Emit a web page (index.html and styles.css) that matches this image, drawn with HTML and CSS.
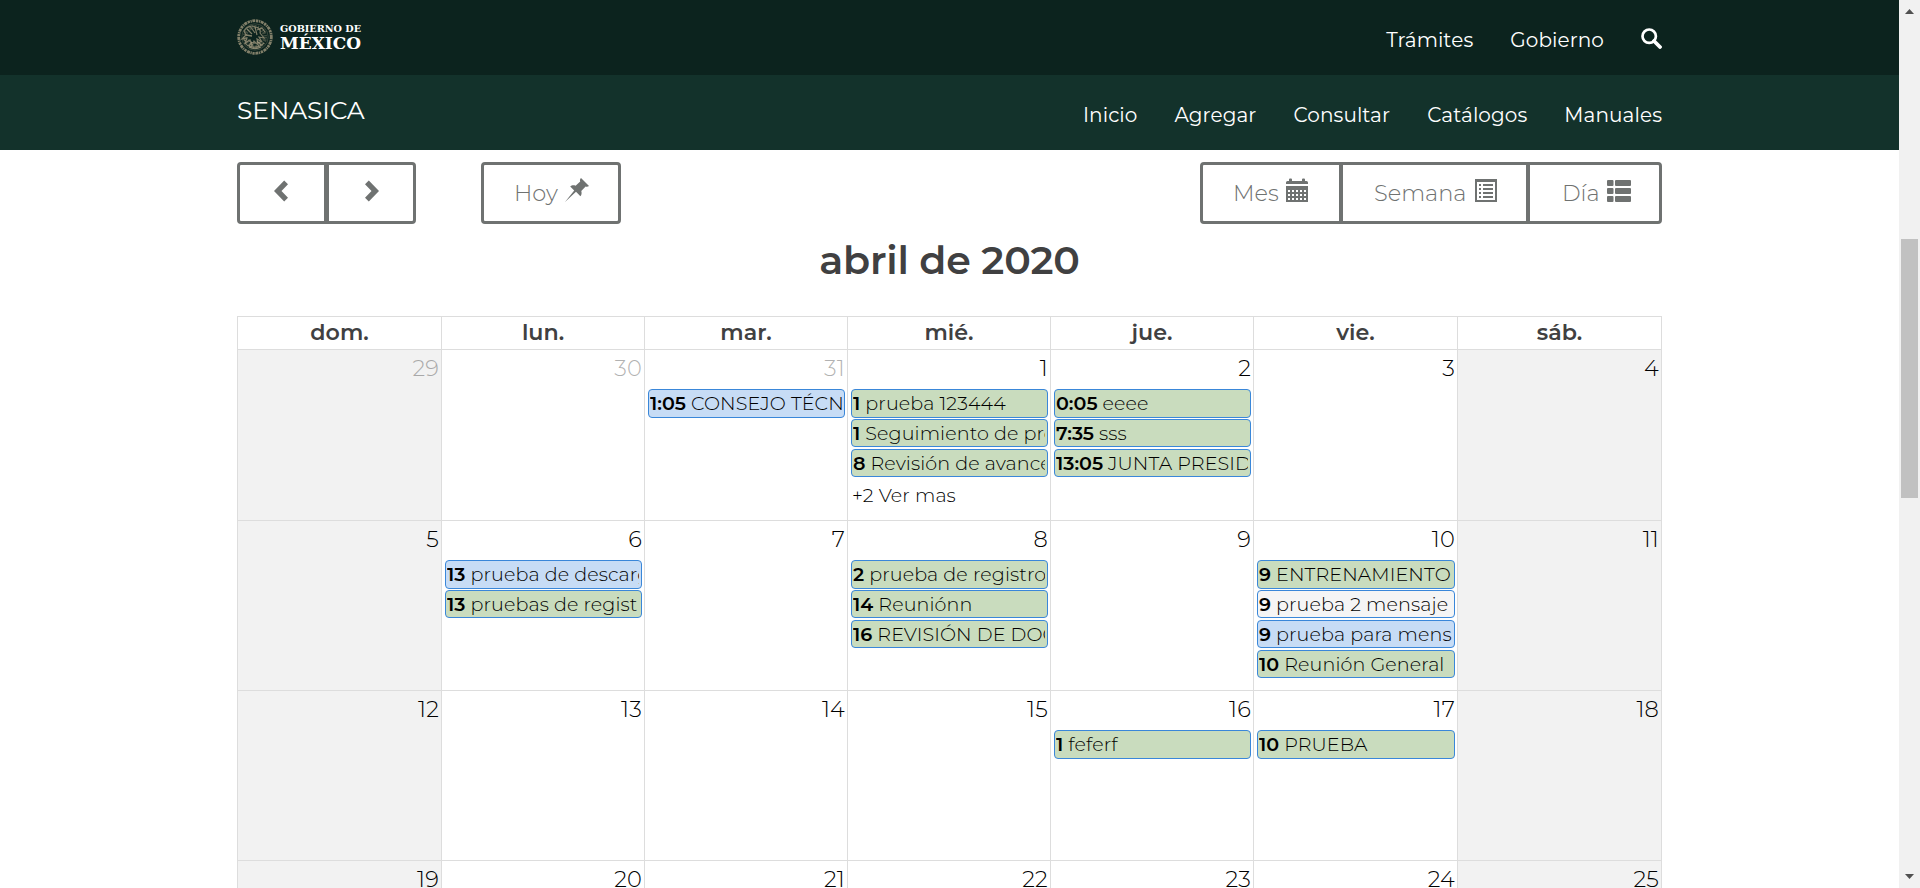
FILE: index.html
```html
<!DOCTYPE html>
<html lang="es">
<head>
<meta charset="utf-8">
<title>SENASICA - Calendario</title>
<link rel="stylesheet" href="styles.css">
</head>
<body>
<div class="window">
<div class="page">
  <header class="topbar">
    <div class="container bar">
      <svg class="logo" width="125" height="40" viewBox="0 0 125 40">
        <g fill="none" stroke="#a39a7f">
          <circle cx="18" cy="20" r="16.3" stroke-width="2.8" stroke-dasharray="2.3 .7 1.2 .6 3 .8" opacity=".78"/>
          <circle cx="18" cy="20" r="13.200" stroke-width=".7" opacity=".4"/>
          <circle cx="18" cy="20" r="10" stroke-width="4" stroke-dasharray="1.200 1 2 1.300" opacity=".35"/>
          <path d="M7 14c3-5 8-6 11-4 4 0 6 3 5 6l4 5-5-1 3 5-5-3 1 6-4-4-2 5-2-6-5 3 2-5-5 1 4-4zM10 12l5 5M13 9l5 7M18 10l2 8M8 26c4 5 13 6 19 0M11 23c4 4 10 4 14 1M6 21l3 4M20 13l5-2 3 4" stroke-width="1.2" opacity=".75"/>
          <path d="M12 30c4 2 8 2 12 0M9 18l6 1M20 24l4 4M15 25l-3 4" stroke-width="1.3" opacity=".8"/>
        </g>
        <text class="logo-text" x="43" y="15" font-size="9.6" textLength="81" lengthAdjust="spacingAndGlyphs">GOBIERNO DE</text>
        <text class="logo-text" x="43" y="32.3" font-size="17" textLength="81" lengthAdjust="spacingAndGlyphs">MÉXICO</text>
      </svg>
      <nav class="nav">
        <a>Trámites</a>
        <a>Gobierno</a>
        <svg class="search" width="21" height="21" viewBox="0 0 21 21" fill="none" stroke="#fff"><circle cx="8.2" cy="8.2" r="6.7" stroke-width="2.7"/><path d="M13 13l6 6" stroke-width="3.8" stroke-linecap="round"/></svg>
      </nav>
    </div>
  </header>
  <div class="subbar">
    <div class="container bar">
      <a class="brand">SENASICA</a>
      <nav class="nav">
        <a>Inicio</a>
        <a>Agregar</a>
        <a>Consultar</a>
        <a>Catálogos</a>
        <a>Manuales</a>
      </nav>
    </div>
  </div>

  <main class="container">
    <div class="toolbar">
      <div class="group">
        <button class="btn arrow"><svg width="14" height="22" viewBox="0 0 14 22"><path d="M10.2.5 14 4.3 7.5 11 14 17.700 10.200 21.500 0 11z"/></svg></button>
        <button class="btn arrow"><svg width="14" height="22" viewBox="0 0 14 22"><path d="M3.800.5 0 4.300 6.500 11 0 17.700 3.800 21.500 14 11z"/></svg></button>
      </div>
      <button class="btn today">Hoy <svg width="24" height="24" viewBox="0 0 24 24"><path d="M16 0 24 8c-1 .8-2.300 1-3.400.500l-4.300 4.500c.6 2 .3 4-.9 5.200l-4.400-4.400L0 24l9.200-11.500-4-4c1.400-1.400 3.600-1.600 5.400-.8l4.600-4.200C14.700 2.300 15 1 16 0z"/></svg></button>
      <div class="group views">
        <button class="btn mes">Mes <svg width="22" height="24" viewBox="0 0 22 24"><path fill-rule="evenodd" d="M0 6V4.500Q0 3 1.500 3H3V1.500Q3 .5 4 .5H5Q6 .5 6 1.500V3H16V1.500Q16 .5 17 .5H18Q19 .5 19 1.500V3H20.500Q22 3 22 4.500V6zM0 8H22V24H0zM2 12v2h2v-2zm4 0v2h2v-2zm4 0v2h2v-2zm4 0v2h2v-2zm4 0v2h2v-2zM2 16v2h2v-2zm4 0v2h2v-2zm4 0v2h2v-2zm4 0v2h2v-2zm4 0v2h2v-2zM2 20v2h2v-2zm4 0v2h2v-2zm4 0v2h2v-2zm4 0v2h2v-2zm4 0v2h2v-2z"/></svg></button>
        <button class="btn semana">Semana <svg width="22" height="24" viewBox="0 0 22 24"><path fill-rule="evenodd" d="M0 1H22V24H0zM2 4V22H20V4zM4 6h2v2H4zm4 0h10v2H8zM4 10h2v2H4zm4 0h10v2H8zM4 14h2v2H4zm4 0h10v2H8zM4 18h2v2H4zm4 0h10v2H8z"/></svg></button>
        <button class="btn dia">Día <svg width="24" height="24" viewBox="0 0 24 24"><rect x="0" y="2" width="6.500" height="6" rx="1"/><rect x="8" y="2" width="16" height="6" rx="1"/><rect x="0" y="10" width="6.500" height="6" rx="1"/><rect x="8" y="10" width="16" height="6" rx="1"/><rect x="0" y="18" width="6.500" height="6" rx="1"/><rect x="8" y="18" width="16" height="6" rx="1"/></svg></button>
      </div>
    </div>

    <h2 class="title">abril de 2020</h2>

    <div class="calendar">
      <div class="head">dom.</div><div class="head">lun.</div><div class="head">mar.</div><div class="head">mié.</div><div class="head">jue.</div><div class="head">vie.</div><div class="head">sáb.</div>

      <div class="day weekend other"><span class="num">29</span></div>
      <div class="day other"><span class="num">30</span></div>
      <div class="day other"><span class="num">31</span>
        <div class="event blue"><b>1:05</b> CONSEJO TÉCN</div></div>
      <div class="day"><span class="num">1</span>
        <div class="event"><b>1</b> prueba 123444</div>
        <div class="event"><b>1</b> Seguimiento de pro</div>
        <div class="event"><b>8</b> Revisión de avance</div>
        <a class="more">+2 Ver mas</a></div>
      <div class="day"><span class="num">2</span>
        <div class="event"><b>0:05</b> eeee</div>
        <div class="event"><b>7:35</b> sss</div>
        <div class="event"><b>13:05</b> JUNTA PRESID</div></div>
      <div class="day"><span class="num">3</span></div>
      <div class="day weekend"><span class="num">4</span></div>

      <div class="day weekend"><span class="num">5</span></div>
      <div class="day"><span class="num">6</span>
        <div class="event blue"><b>13</b> prueba de descarg</div>
        <div class="event"><b>13</b> pruebas de regist</div></div>
      <div class="day"><span class="num">7</span></div>
      <div class="day"><span class="num">8</span>
        <div class="event"><b>2</b> prueba de registro</div>
        <div class="event"><b>14</b> Reuniónn</div>
        <div class="event"><b>16</b> REVISIÓN DE DOC</div></div>
      <div class="day"><span class="num">9</span></div>
      <div class="day"><span class="num">10</span>
        <div class="event"><b>9</b> ENTRENAMIENTO</div>
        <div class="event plain"><b>9</b> prueba 2 mensaje</div>
        <div class="event blue"><b>9</b> prueba para mens</div>
        <div class="event"><b>10</b> Reunión General</div></div>
      <div class="day weekend"><span class="num">11</span></div>

      <div class="day weekend"><span class="num">12</span></div>
      <div class="day"><span class="num">13</span></div>
      <div class="day"><span class="num">14</span></div>
      <div class="day"><span class="num">15</span></div>
      <div class="day"><span class="num">16</span>
        <div class="event"><b>1</b> feferf</div></div>
      <div class="day"><span class="num">17</span>
        <div class="event"><b>10</b> PRUEBA</div></div>
      <div class="day weekend"><span class="num">18</span></div>

      <div class="day weekend"><span class="num">19</span></div>
      <div class="day"><span class="num">20</span></div>
      <div class="day"><span class="num">21</span></div>
      <div class="day"><span class="num">22</span></div>
      <div class="day"><span class="num">23</span></div>
      <div class="day"><span class="num">24</span></div>
      <div class="day weekend"><span class="num">25</span></div>
    </div>
  </main>
</div>
<div class="scrollbar">
  <svg width="9" height="5" viewBox="0 0 9 5"><path d="M0 5 4.500 0 9 5z" fill="#505050"/></svg>
  <div class="thumb"></div>
  <svg class="down" width="9" height="5" viewBox="0 0 9 5"><path d="M0 0 4.500 5 9 0z" fill="#505050"/></svg>
</div>
</div>
</body>
</html>
```
FILE: styles.css
```css
* { box-sizing: border-box; }
body { margin: 0; background: #fff; font-family: Montserrat, Inter, "Open Sans", sans-serif; font-weight: 300; color: #000; }
.window { display: flex; height: 888px; overflow: hidden; }
.page { flex: 1; height: 888px; overflow: hidden; }
.container { width: 1425px; margin-left: 237px; }
.bar { display: flex; justify-content: space-between; height: 75px; }
.topbar { background: #0c231e; }
.subbar { background: #13322b; }
.logo { margin-top: 17px; }
.logo-text { font-family: "DejaVu Serif", serif; font-weight: 700; fill: #fff; }
.nav { display: flex; gap: 37px; padding-top: 28px; font-size: 20px; line-height: 24px; font-weight: 400; color: #fff; letter-spacing: .1px; }
.brand { padding-top: 20px; font-size: 25px; line-height: 30px; font-weight: 400; color: #fff; letter-spacing: -.1px; }
.toolbar { display: flex; padding-top: 12px; height: 74px; }
.group { display: flex; }
.btn { display: flex; align-items: center; height: 62px; border: 3px solid #6f7271; border-radius: 4px; background: #fff; color: #6f7271; font: inherit; font-size: 22.5px; padding: 0 0 0 30px; gap: 7px; }
.btn svg { fill: #6f7271; flex: none; margin-top: -6px; }
.arrow { width: 90px; justify-content: center; padding: 0; }
.arrow svg { margin-top: -4px; }
.arrow:first-child { border-radius: 4px 0 0 4px; padding-right: 2px; }
.arrow + .arrow { margin-left: -1px; border-radius: 0 4px 4px 0; padding-left: 2px; }
.today { width: 140px; margin-left: 65px; }
.views { margin-left: auto; }
.mes { width: 142px; border-radius: 4px 0 0 4px; }
.semana { width: 189px; margin-left: -2px; border-radius: 0; gap: 8.5px; padding-left: 31px; }
.dia { width: 135px; margin-left: -2px; border-radius: 0 4px 4px 0; padding-left: 32px; }
.title { margin: 0; height: 92px; padding-top: 12px; text-align: center; font-size: 39.5px; line-height: 48px; font-weight: 600; color: #404041; letter-spacing: -.2px; }
.calendar { display: grid; grid-template-columns: 204px 203px 203px 203px 203px 204px 205px; grid-template-rows: 33px 171px 170px 170px 170px; }
.head, .day { border-top: 1px solid #ddd; border-left: 1px solid #ddd; min-width: 0; }
.calendar > :nth-child(7n) { border-right: 1px solid #ddd; }
.head { text-align: center; font-size: 22.2px; line-height: 32px; font-weight: 600; color: #404041; }
.day { display: flex; flex-direction: column; padding: 3px 2px 0 3px; }
.weekend { background: #f2f2f2; }
.num { align-self: flex-end; height: 36px; line-height: 30px; font-size: 22.5px; letter-spacing: .2px; }
.other .num { opacity: .3; }
.event { height: 28px; margin-bottom: 2px; flex: none; border: 1px solid #3a87d9; border-radius: 4px; background: #c9dcbe; padding: 0 2px 0 1px; font-size: 19.125px; line-height: 27px; letter-spacing: .1px; white-space: nowrap; overflow: clip; overflow-clip-margin: content-box; }
.num + .event { height: 29px; margin-bottom: 1px; }
.event b { font-weight: 600; letter-spacing: 0; }
.blue { background: #c7dcf5; }
.plain { background: #f5f5f5; }
.more { padding: 4px 0 0 1px; font-size: 19.125px; line-height: 24px; letter-spacing: .1px; }
.scrollbar { width: 21px; background: #f1f1f1; display: flex; flex-direction: column; align-items: center; padding: 9px 0; }
.thumb { width: 17px; height: 259px; margin-top: 225px; background: #c1c1c1; }
.down { margin-top: auto; }
```
